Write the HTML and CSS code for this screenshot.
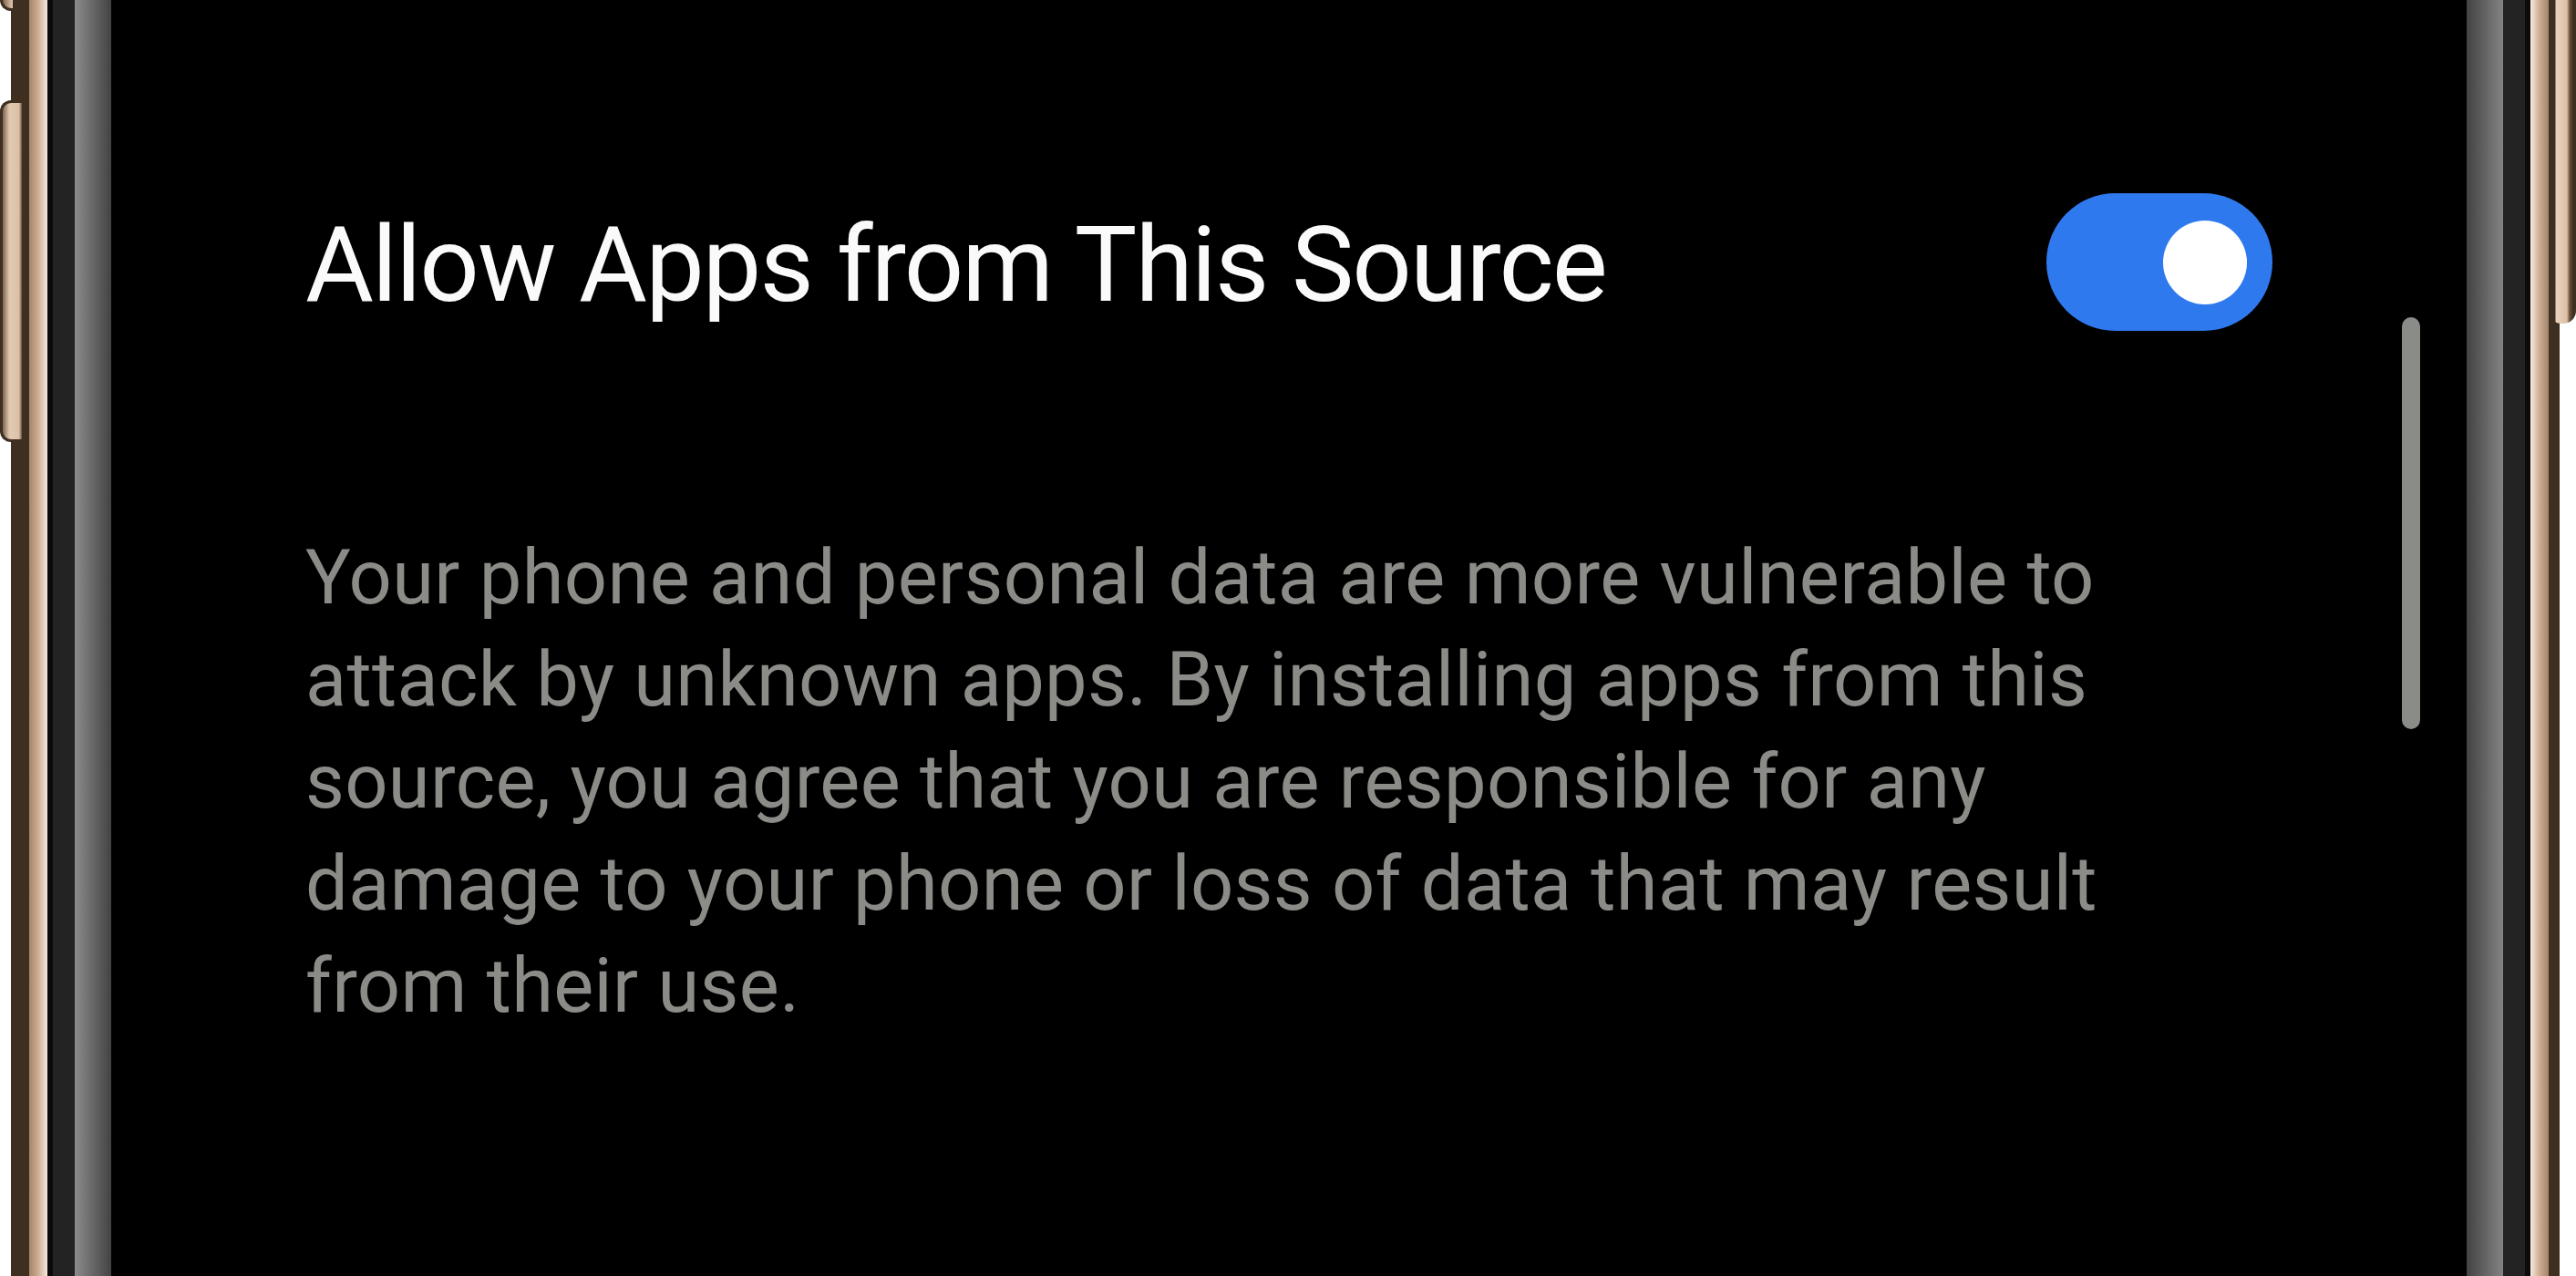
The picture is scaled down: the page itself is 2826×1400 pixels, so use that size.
FILE: index.html
```html
<!DOCTYPE html>
<html lang="en">
<head>
<meta charset="utf-8">
<title>Allow Apps from This Source</title>
<link rel="stylesheet" href="styles.css">
</head>
<body>
<div class="phone">
  <div class="btn btn-left-top"></div>
  <div class="btn btn-left"></div>
  <div class="btn btn-right"></div>
  <div class="strip gap-left"></div>
  <div class="strip brown-left"></div>
  <div class="strip gold-left"></div>
  <div class="strip black-line"></div>
  <div class="strip bezel"></div>
  <div class="strip glass-left"></div>
  <main class="screen">
    <div class="setting-row">
      <span class="setting-title">Allow Apps from This Source</span>
      <span class="toggle"><span class="knob"></span></span>
    </div>
    <p class="warning">Your phone and personal data are more vulnerable to<br>attack by unknown apps. By installing apps from this<br>source, you agree that you are responsible for any<br>damage to your phone or loss of data that may result<br>from their use.</p>
    <div class="scrollbar"></div>
  </main>
  <div class="strip glass-right"></div>
  <div class="strip bezel"></div>
  <div class="strip black-line"></div>
  <div class="strip gold-right"></div>
  <div class="strip brown-right"></div>
  <div class="strip gap-right"></div>
</div>
</body>
</html>
```

FILE: styles.css
```css
html, body {
  margin: 0;
  padding: 0;
  background: #ffffff;
}

.phone {
  position: relative;
  display: flex;
  width: 2826px;
  height: 1400px;
  overflow: hidden;
}

.strip {
  flex: none;
  height: 100%;
}

.gap-left { width: 12px; background: #ffffff; }
.gap-right { width: 18px; background: #ffffff; }
.brown-left { width: 20px; background: #3e2f21; }
.brown-right { width: 12px; background: #3e2f21; }
.gold-left {
  width: 20px;
  background: linear-gradient(to right, #a4866c, #c9a88c 45%, #f7eadf);
}
.gold-right {
  width: 20px;
  background: linear-gradient(to right, #f7eadf, #c9a88c 55%, #a4866c);
}
.black-line { width: 6px; background: #0b0b0b; }
.bezel { width: 24px; background: #232323; }
.glass-left {
  width: 40px;
  background: linear-gradient(to right, #8b8b8b, #434343);
}
.glass-right {
  width: 40px;
  background: linear-gradient(to right, #434343, #838383);
}

.btn {
  position: absolute;
  z-index: 2;
  box-sizing: border-box;
}
.btn-left {
  left: 0;
  top: 110px;
  width: 24px;
  height: 375px;
  border: 3px solid #3e2f21;
  border-right: none;
  border-radius: 12px 0 0 12px;
  background: linear-gradient(to right, #7d6550, #e2cab2 35%, #dcc1a7 85%, #6b533e);
}
.btn-left-top {
  left: 0;
  top: -30px;
  width: 14px;
  height: 42px;
  border: 3px solid #3e2f21;
  border-right: none;
  border-radius: 0 0 0 12px;
  background: linear-gradient(to right, #7d6550, #e2cab2);
}
.btn-right {
  right: 0;
  top: -30px;
  width: 30px;
  height: 385px;
  border-radius: 0 0 14px 14px;
  background: linear-gradient(to right, #3e2f21 0 7px, #ead4bf 8px, #dbbfa5 20px, #6a523d 23px, #3e2f21 27px);
}

.screen {
  position: relative;
  flex: 1 1 auto;
  height: 100%;
  background: #000000;
  box-sizing: border-box;
  padding: 212px 213px 0 213px;
  font-family: Roboto, "Noto Sans", sans-serif;
}

.setting-row {
  display: flex;
  align-items: center;
  justify-content: space-between;
  height: 151px;
}

.setting-title {
  color: #fafafa;
  font-size: 115px;
  line-height: 151px;
  letter-spacing: -1.9px;
  margin-top: 6px;
  white-space: nowrap;
}

.toggle {
  display: flex;
  align-items: center;
  justify-content: flex-end;
  box-sizing: border-box;
  width: 248px;
  height: 151px;
  padding-right: 28px;
  border-radius: 76px;
  background: #2f79ef;
}

.knob {
  width: 92px;
  height: 92px;
  border-radius: 50%;
  background: #ffffff;
}

.warning {
  margin: 215px 0 0 0;
  color: #8b8c88;
  font-size: 83px;
  line-height: 112px;
  letter-spacing: 0.35px;
  white-space: nowrap;
}

.scrollbar {
  position: absolute;
  top: 348px;
  right: 51px;
  width: 20px;
  height: 452px;
  border-radius: 10px;
  background: #8a8c88;
}
```
